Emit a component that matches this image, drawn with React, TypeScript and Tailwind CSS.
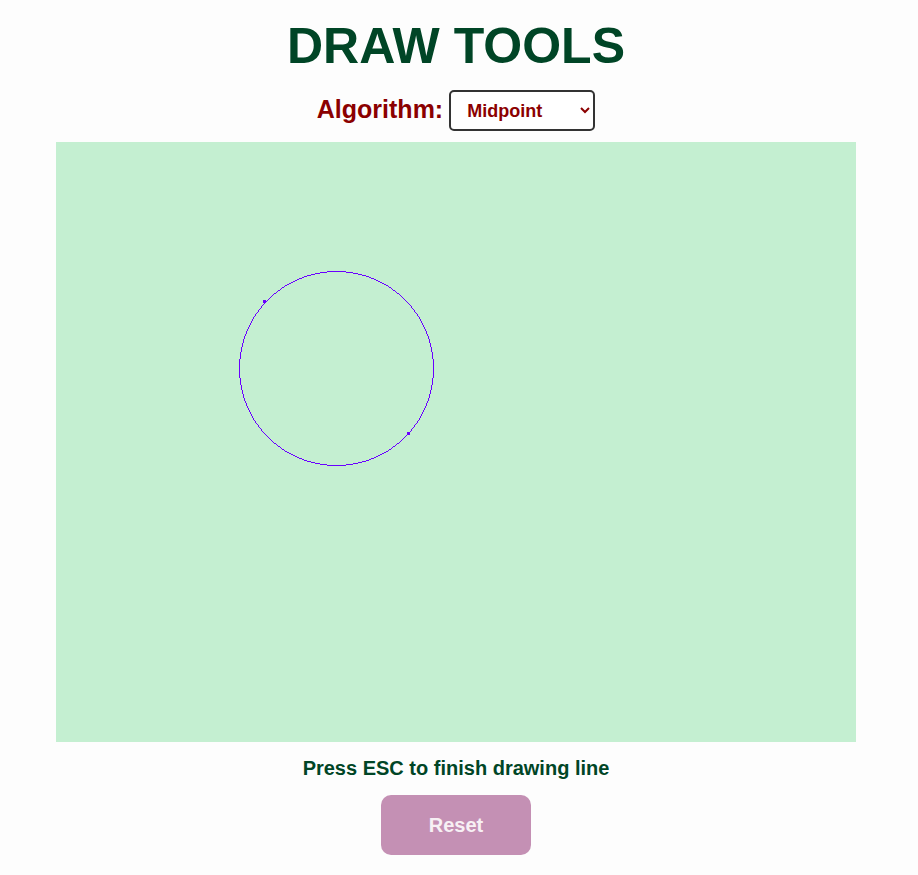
import React, { useEffect, useRef } from "react";

export default function App() {
  const ref = useRef<HTMLCanvasElement>(null);
  useEffect(() => {
    const c = ref.current;
    if (!c) return;
    const ctx = c.getContext("2d");
    if (!ctx) return;
    ctx.clearRect(0, 0, 800, 600);
    ctx.fillStyle = "#6a00ff";
    const cx = 280;
    const cy = 226;
    const r = 97;
    let x = 0;
    let y = r;
    let p = 1 - r;
    const plot = (a: number, b: number) => {
      ctx.fillRect(cx + a, cy + b, 1, 1);
      ctx.fillRect(cx - a, cy + b, 1, 1);
      ctx.fillRect(cx + a, cy - b, 1, 1);
      ctx.fillRect(cx - a, cy - b, 1, 1);
      ctx.fillRect(cx + b, cy + a, 1, 1);
      ctx.fillRect(cx - b, cy + a, 1, 1);
      ctx.fillRect(cx + b, cy - a, 1, 1);
      ctx.fillRect(cx - b, cy - a, 1, 1);
    };
    while (x <= y) {
      plot(x, y);
      x++;
      if (p < 0) {
        p += 2 * x + 1;
      } else {
        y--;
        p += 2 * (x - y) + 1;
      }
    }
    ctx.fillRect(207, 158, 3, 3);
    ctx.fillRect(351, 290, 3, 3);
  }, []);

  return (
    <div
      className="min-h-[875px] w-full bg-[#fdfdfd]"
      style={{ fontFamily: '"Liberation Sans", Arial, sans-serif' }}
    >
      <div className="w-[912px] flex flex-col items-center">
        <h1 className="mt-[18px] text-[50px] leading-[56px] font-bold text-[#004526]">
          DRAW TOOLS
        </h1>
        <div className="mt-[16px] flex items-center gap-[6px]">
          <span className="text-[25px] font-bold text-[#8b0000] leading-[29px] -mt-[2px]">
            Algorithm:
          </span>
          <select
            defaultValue="midpoint"
            className="h-[41px] w-[146px] rounded-[5px] border-2 border-[#333333] bg-white pl-[12px] pr-[6px] text-[18px] font-bold text-[#8b0000]"
            style={{ fontFamily: '"Liberation Sans", Arial, sans-serif' }}
          >
            <option value="dda">DDA</option>
            <option value="bresenham">Bresenham</option>
            <option value="midpoint">Midpoint</option>
          </select>
        </div>
        <canvas
          ref={ref}
          width={800}
          height={600}
          className="mt-[11px] block h-[600px] w-[800px] bg-[#c4efd1]"
        />
        <p className="mt-[15px] text-[20px] leading-[23px] font-bold text-[#004526]">
          Press ESC to finish drawing line
        </p>
        <button className="mt-[15px] h-[60px] w-[150px] rounded-[10px] bg-[#c490b4] text-[20px] font-bold text-[#f7f0f4]">
          Reset
        </button>
      </div>
    </div>
  );
}
